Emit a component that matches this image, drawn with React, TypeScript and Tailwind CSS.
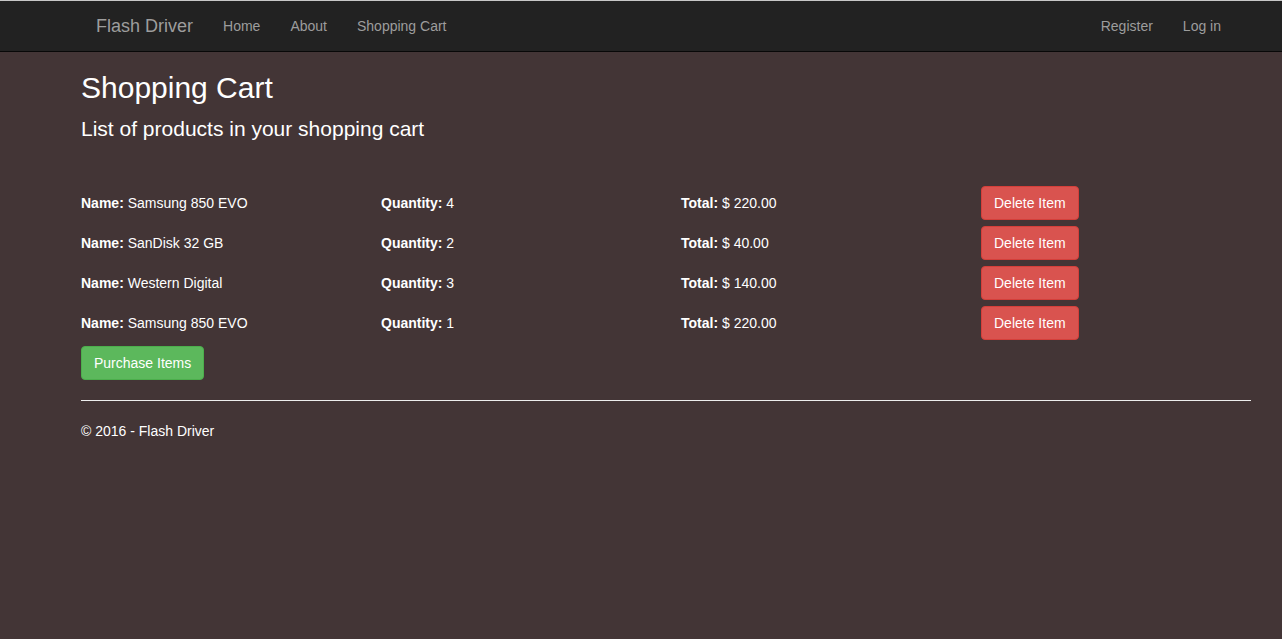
import React from "react";

const items = [
  { name: "Samsung 850 EVO", qty: 4, total: "$ 220.00" },
  { name: "SanDisk 32 GB", qty: 2, total: "$ 40.00" },
  { name: "Western Digital", qty: 3, total: "$ 140.00" },
  { name: "Samsung 850 EVO", qty: 1, total: "$ 220.00" },
];

export default function App() {
  return (
    <div
      className="min-h-[639px] bg-[#433536] text-white text-[14px] leading-[20px]"
      style={{ fontFamily: '"Liberation Sans", Arial, sans-serif' }}
    >
      <nav className="h-[52px] bg-[#222222] border-t border-t-[#c8c8c8] border-b border-b-[#080808]">
        <div className="flex h-[50px] items-center pl-[81px] pr-[46px]">
          <span className="px-[15px] text-[18px] text-[#9d9d9d]">Flash Driver</span>
          <div className="flex">
            <span className="px-[15px] text-[#9d9d9d]">Home</span>
            <span className="px-[15px] text-[#9d9d9d]">About</span>
            <span className="px-[15px] text-[#9d9d9d]">Shopping Cart</span>
          </div>
          <div className="ml-auto flex">
            <span className="px-[15px] text-[#9d9d9d]">Register</span>
            <span className="px-[15px] text-[#9d9d9d]">Log in</span>
          </div>
        </div>
      </nav>
      <div className="ml-[81px] w-[1170px]">
        <h2 className="mt-[19px] mb-[13px] text-[30px] leading-[33px] font-normal">Shopping Cart</h2>
        <h4 className="mt-0 text-[21px] leading-[23px] font-normal">List of products in your shopping cart</h4>
        <div className="mt-[43px] -mx-[15px]">
          {items.map((it, i) => (
            <div key={i} className="grid grid-cols-4 h-[40px] items-center">
              <div className="px-[15px]">
                <b>Name:</b> {it.name}
              </div>
              <div className="px-[15px]">
                <b>Quantity:</b> {it.qty}
              </div>
              <div className="px-[15px]">
                <b>Total:</b> {it.total}
              </div>
              <div className="px-[15px]">
                <button className="h-[34px] px-[12px] rounded-[4px] bg-[#d9534f] border border-[#d43f3a] text-white text-[14px]">
                  Delete Item
                </button>
              </div>
            </div>
          ))}
        </div>
        <button className="mt-[3px] h-[34px] px-[12px] rounded-[4px] bg-[#5cb85c] border border-[#4cae4c] text-white text-[14px]">
          Purchase Items
        </button>
        <hr className="mt-[20px] mb-[20px] border-0 border-t border-t-[#eeeeee]" />
        <p className="mt-0">© 2016 - Flash Driver</p>
      </div>
    </div>
  );
}
